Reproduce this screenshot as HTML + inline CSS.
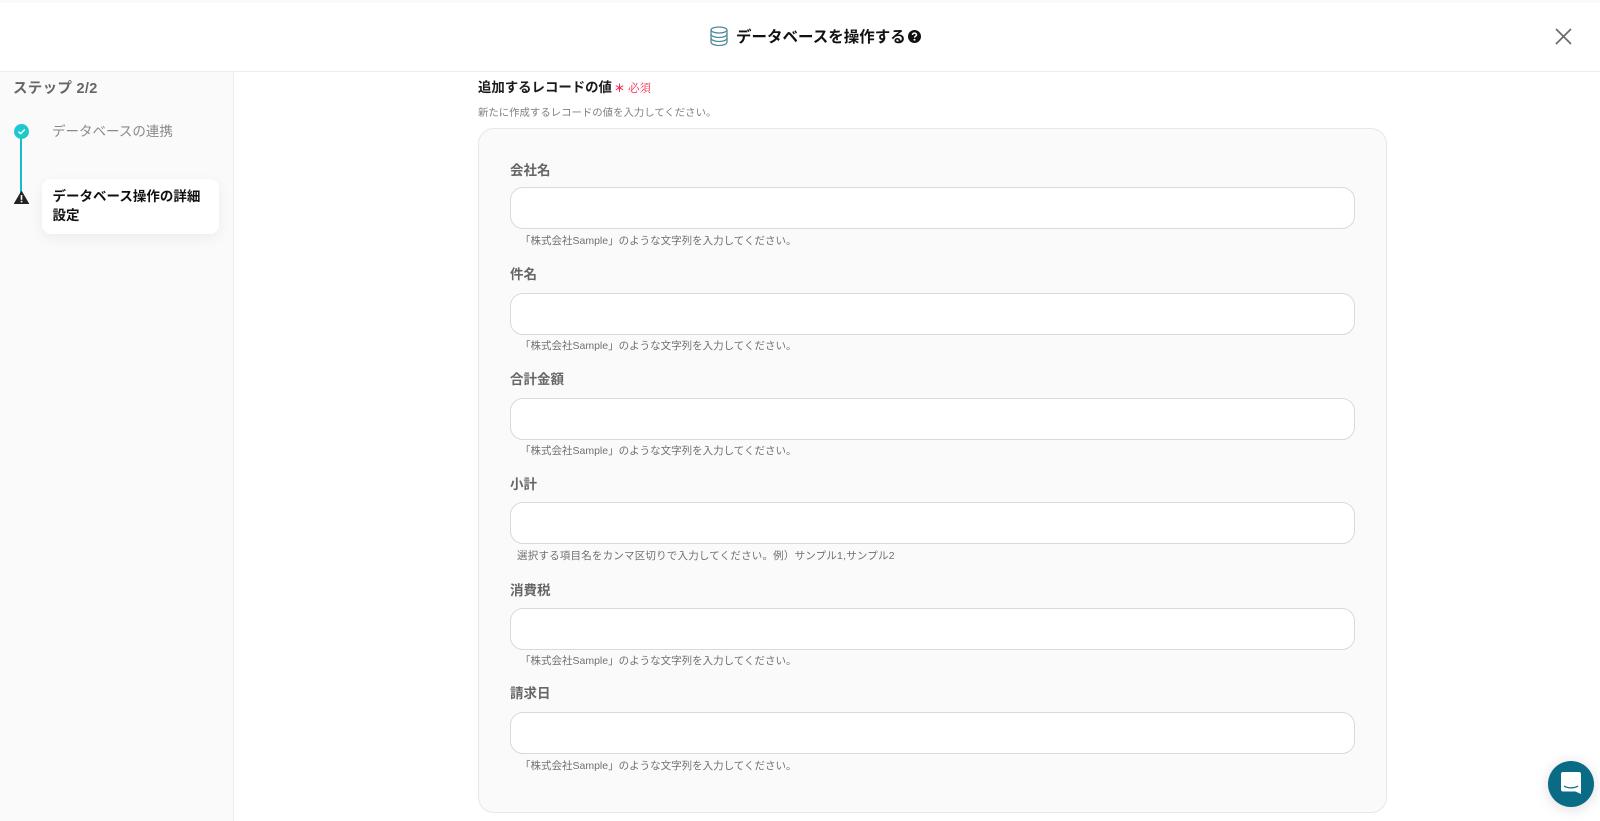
<!DOCTYPE html>
<html lang="ja">
<head>
<meta charset="utf-8">
<title>データベースを操作する</title>
<style>
*{box-sizing:border-box}
html,body{margin:0;padding:0;width:1600px;height:821px;overflow:hidden;background:#fff;font-family:"Liberation Sans","Noto Sans CJK JP",sans-serif}
.a{position:absolute;white-space:nowrap}
.lab{left:510px;font-size:13.5px;font-weight:700;color:#666;line-height:20px}
.inp{left:510px;width:845px;height:42px;background:#fff;border:1px solid #d8dade;border-radius:13px}
.hint{font-size:10.5px;color:#707070;line-height:16px}
</style>
</head>
<body>
<div class="a" style="left:0;top:0;width:1600px;height:3px;background:#f8f8fd"></div>
<div class="a" style="left:0;top:71px;width:234px;height:750px;background:#fafafa;border-right:1px solid #eeeeee"></div>
<div class="a" style="left:0;top:71px;width:1600px;height:1px;background:#ececec"></div>

<svg class="a" style="left:708px;top:25px" width="22" height="22" viewBox="0 0 22 22" fill="none" stroke="#4f8a9e" stroke-width="1.3">
<ellipse cx="11" cy="5" rx="8" ry="3"/>
<path d="M3 5V17C3 19 6.500 20.500 11 20.500S19 19 19 17V5"/>
<path d="M3 9C3 11 6.500 12.500 11 12.500S19 11 19 9"/>
<path d="M3 13C3 15 6.500 16.500 11 16.500S19 15 19 13"/>
</svg>
<div class="a" style="left:736px;top:27px;font-size:15.500px;font-weight:700;color:#111;line-height:22px">データベースを操作する</div>
<svg class="a" style="left:908px;top:30px" width="13" height="13" viewBox="0 0 13 13">
<circle cx="6.500" cy="6.500" r="6.500" fill="#111"/>
<path d="M4.500 5C4.500 3.700 5.400 3.100 6.500 3.100S8.500 3.800 8.500 4.900C8.500 6.200 6.500 6.200 6.500 7.600" fill="none" stroke="#fff" stroke-width="1.500"/>
<circle cx="6.500" cy="9.700" r="1" fill="#fff"/>
</svg>
<svg class="a" style="left:1555px;top:28px" width="17" height="17" viewBox="0 0 17 17" stroke="#6b6b6b" stroke-width="1.700" fill="none">
<path d="M1 1L16 16M16 1L1 16"/>
</svg>

<div class="a" style="left:13px;top:78px;font-size:14.500px;font-weight:700;color:#666;line-height:22px;letter-spacing:.3px">ステップ 2/2</div>
<div class="a" style="left:20px;top:136px;width:2px;height:62px;background:#17bccb"></div>
<svg class="a" style="left:14px;top:124px" width="15" height="15" viewBox="0 0 15 15">
<defs><linearGradient id="g" x1="0" y1="0" x2="1" y2="1"><stop offset="0" stop-color="#1fc8e0"/><stop offset="1" stop-color="#1fc9b8"/></linearGradient></defs>
<circle cx="7.500" cy="7.500" r="7.500" fill="url(#g)"/>
<path d="M4.500 7.700L6.700 9.700L10.700 5.500" fill="none" stroke="#fff" stroke-width="1.400"/>
</svg>
<svg class="a" style="left:14px;top:191px" width="15" height="13" viewBox="0 0 15 13">
<path d="M7.500 .5L14.700 12.800H.3Z" fill="#222" stroke="#222" stroke-linejoin="round"/>
<rect x="6.700" y="4" width="1.600" height="4.800" fill="#fff"/>
<rect x="6.700" y="9.800" width="1.600" height="1.600" fill="#fff"/>
</svg>
<div class="a" style="left:52px;top:120.500px;font-size:13.500px;color:#8a8a8a;line-height:22px">データベースの連携</div>
<div class="a" style="left:42px;top:179px;width:177px;height:55px;background:#fff;border-radius:9px;box-shadow:0 4px 14px rgba(0,0,0,.06)"></div>
<div class="a" style="left:52.500px;top:187px;font-size:13.500px;font-weight:700;color:#111;line-height:19px">データベース操作の詳細<br>設定</div>

<div class="a" style="left:478px;top:78px;font-size:13.400px;font-weight:700;color:#1a1a1a;line-height:20px">追加するレコードの値</div>
<div class="a" style="left:614px;top:80px;font-size:11px;font-weight:700;color:#f5274f;line-height:18px">＊</div>
<div class="a" style="left:628px;top:79.500px;font-size:11.500px;color:#f5274f;font-family:'Liberation Serif','Noto Serif CJK SC',serif;line-height:18px">必須</div>
<div class="a" style="left:478px;top:106px;font-size:10.400px;color:#808080;line-height:16px">新たに作成するレコードの値を入力してください。</div>

<div class="a" style="left:478px;top:128px;width:909px;height:685px;background:#fafafa;border:1px solid #e6e7ea;border-radius:16px"></div>

<div class="a lab" style="top:161px">会社名</div>
<div class="a inp" style="top:187px"></div>
<div class="a hint" style="left:520px;top:233px">「株式会社Sample」のような文字列を入力してください。</div>

<div class="a lab" style="top:265px">件名</div>
<div class="a inp" style="top:293px"></div>
<div class="a hint" style="left:520px;top:338px">「株式会社Sample」のような文字列を入力してください。</div>

<div class="a lab" style="top:370px">合計金額</div>
<div class="a inp" style="top:398px"></div>
<div class="a hint" style="left:520px;top:443px">「株式会社Sample」のような文字列を入力してください。</div>

<div class="a lab" style="top:475px">小計</div>
<div class="a inp" style="top:502px"></div>
<div class="a hint" style="left:517px;top:548px;letter-spacing:.2px">選択する項目名をカンマ区切りで入力してください。例）サンプル1,サンプル2</div>

<div class="a lab" style="top:581px">消費税</div>
<div class="a inp" style="top:608px"></div>
<div class="a hint" style="left:520px;top:653px">「株式会社Sample」のような文字列を入力してください。</div>

<div class="a lab" style="top:684px">請求日</div>
<div class="a inp" style="top:712px"></div>
<div class="a hint" style="left:520px;top:758px">「株式会社Sample」のような文字列を入力してください。</div>

<div class="a" style="left:1548px;top:761px;width:46px;height:46px;border-radius:50%;background:#0a6b85;box-shadow:0 2px 14px rgba(0,0,0,.14)"></div>
<svg class="a" style="left:1560px;top:771px" width="22" height="24" viewBox="0 0 22 24">
<path d="M3 1H19C20.200 1 21 1.800 21 3V23L15.500 20.500H3C1.800 20.500 1 19.700 1 18.500V3C1 1.800 1.800 1 3 1Z" fill="#fff"/>
<path d="M4 15C8 17.500 14 17.500 18 15" fill="none" stroke="#0a6b85" stroke-width="1.300"/>
</svg>
</body>
</html>
